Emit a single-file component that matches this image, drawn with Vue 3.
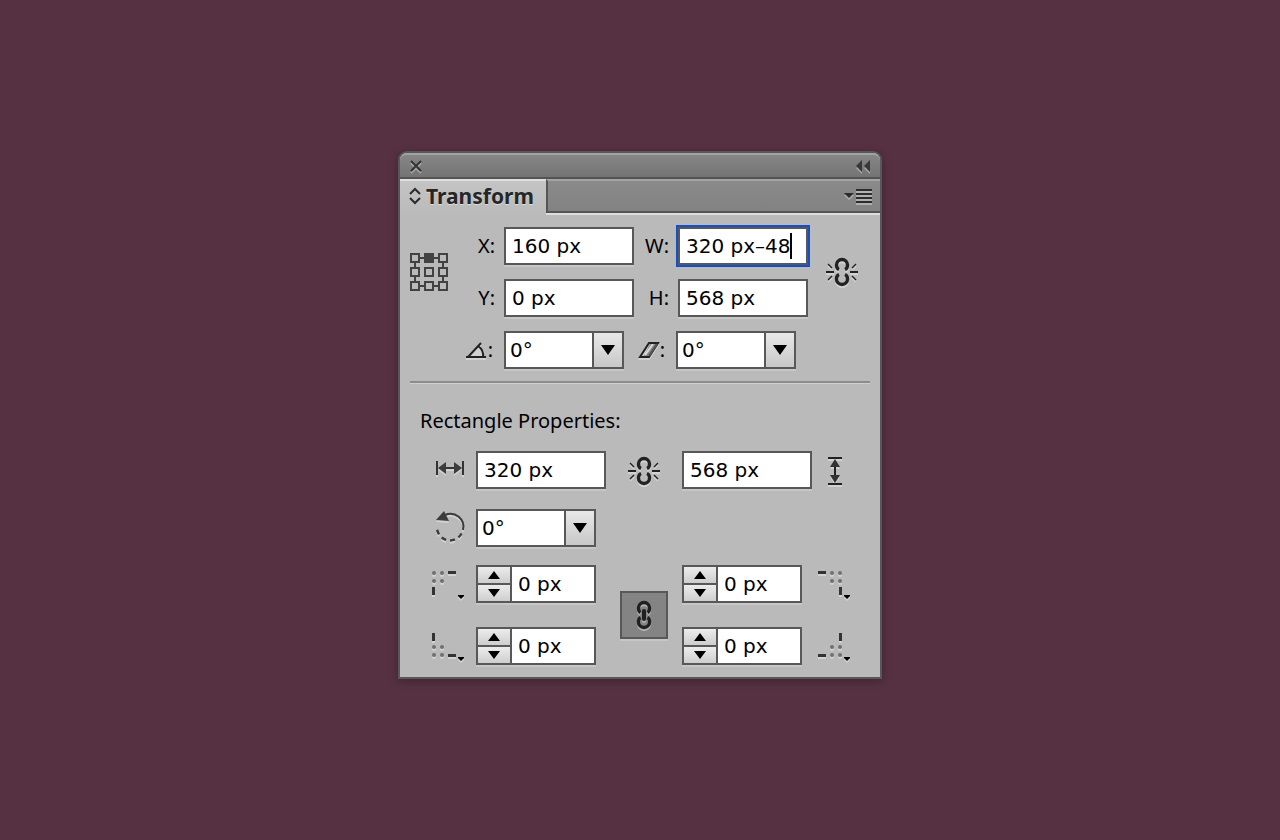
<script setup>
import { ref } from 'vue'

const x = ref('160 px')
const y = ref('0 px')
const w = ref('320 px–48')
const h = ref('568 px')
const rotate = ref('0°')
const shear = ref('0°')
const rectWidth = ref('320 px')
const rectHeight = ref('568 px')
const rectAngle = ref('0°')

const cells = [0, 14, 28]
const corners = ref([
  { id: 'tl', name: 'Top left radius', value: '0 px', dash: [16, 1], bar: [0, 17], dots: [2, 10], top: 3 },
  { id: 'tr', name: 'Top right radius', value: '0 px', dash: [0, 1], bar: [21, 17], dots: [14, 22], top: 3 },
  { id: 'bl', name: 'Bottom left radius', value: '0 px', dash: [16, 22], bar: [0, 1], dots: [2, 10], top: 15 },
  { id: 'br', name: 'Bottom right radius', value: '0 px', dash: [0, 22], bar: [21, 1], dots: [14, 22], top: 15 },
])
</script>

<template>
  <main class="stage">
    <section class="panel" aria-label="Transform">
      <header class="titlebar">
        <button class="bare" aria-label="Close">
          <svg class="icon" width="12" height="12" viewBox="0 0 12 12"><path d="M1 1L11 11M11 1L1 11" fill="none" stroke="#333" stroke-width="2" /></svg>
        </button>
        <button class="bare" aria-label="Collapse">
          <svg class="icon" width="14" height="12" viewBox="0 0 14 12"><path d="M6 0V12L0 6ZM14 0V12L8 6Z" fill="#383838" /></svg>
        </button>
      </header>

      <div class="tabs">
        <button class="tab">
          <svg width="12" height="18" viewBox="0 0 12 18" fill="none" stroke="#2c2c2c" stroke-width="2"><path d="M1 7L6 2L11 7M1 11L6 16L11 11" /></svg>
          <span>Transform</span>
        </button>
        <div class="tabfill">
          <button class="bare" aria-label="Panel menu">
            <svg class="icon" width="28" height="14" viewBox="0 0 28 14" fill="#2c2c2c"><path d="M0 4H10L5 9ZM12 0H28V2H12ZM12 4H28V6H12ZM12 8H28V10H12ZM12 12H28V14H12Z" /></svg>
          </button>
        </div>
      </div>

      <div class="geometry">
        <button class="bare" aria-label="Reference point">
          <svg width="38" height="38" viewBox="0 0 38 38" fill="none" stroke="#424242" stroke-width="2">
            <template v-for="cy in cells" :key="cy">
              <rect v-for="cx in cells" :key="cx" :x="cx + 1" :y="cy + 1" width="8" height="8" :fill="cx === 14 && cy === 0 ? '#424242' : 'none'" />
            </template>
            <path d="M10 5H14M24 5H28M10 33H14M24 33H28M5 10V14M5 24V28M33 10V14M33 24V28" />
          </svg>
        </button>
        <div class="pairs">
          <label for="x">X:</label>
          <input id="x" v-model="x" class="field" />
          <label for="w">W:</label>
          <div class="focused">
            <input id="w" v-model="w" class="field" />
            <i class="caret"></i>
          </div>
          <label for="y">Y:</label>
          <input id="y" v-model="y" class="field" />
          <label for="h">H:</label>
          <input id="h" v-model="h" class="field" />
        </div>
        <button class="bare" aria-label="Constrain proportions">
          <svg class="icon" width="32" height="30" viewBox="0 0 32 30"><use href="#broken-link" /></svg>
        </button>
      </div>

      <div class="angles">
        <label for="rotate" aria-label="Rotate">
          <svg class="icon" width="22" height="18" viewBox="0 0 22 18" fill="none" stroke="#222" stroke-width="2">
            <path d="M3 15L14 5Q18 9 18 15Z" fill="#d2d2d2" stroke="none" />
            <path d="M0 16H20M2 16L15 2M12 5Q18 9 17 16" />
          </svg>:
        </label>
        <div class="combo">
          <input id="rotate" v-model="rotate" />
          <button aria-label="Rotate presets"><svg width="14" height="11" viewBox="0 0 14 11"><path d="M0 0H14L7 10Z" /></svg></button>
        </div>
        <label for="shear" aria-label="Shear">
          <svg class="icon" width="22" height="18" viewBox="0 0 22 18" fill="none" stroke="#222">
            <path d="M12 3H20L10 15H6Z" fill="#888" stroke="none" />
            <path d="M7 14L15 3" stroke="#ddd" stroke-width="2" />
            <path d="M2 16L11 2H20L11 16Z" stroke-width="2" />
            <path d="M11 15L19 3" stroke="#555" stroke-width="2" />
          </svg>:
        </label>
        <div class="combo">
          <input id="shear" v-model="shear" />
          <button aria-label="Shear presets"><svg width="14" height="11" viewBox="0 0 14 11"><path d="M0 0H14L7 10Z" /></svg></button>
        </div>
      </div>

      <hr />
      <h2>Rectangle Properties:</h2>

      <div class="grid">
        <label for="rw" aria-label="Rectangle width">
          <svg class="icon" width="30" height="20" viewBox="0 0 30 20">
            <path d="M1 1V15M27 1V15M8 8H20" stroke="#333" stroke-width="2" />
            <path d="M2 8L10 2V14ZM26 8L18 2V14Z" fill="#3c3c3c" />
          </svg>
        </label>
        <input id="rw" v-model="rectWidth" class="field" />
        <button class="bare center" aria-label="Constrain rectangle proportions">
          <svg class="icon" width="32" height="32" viewBox="0 -2 32 32">
            <g id="broken-link" fill="none" stroke="#222">
              <path d="M13 12.500Q10.500 11.500 10.500 8A5.500 5.500 0 0 1 21.500 8Q21.500 11.500 19 12.500M13 17.500Q10.500 18.500 10.500 22A5.500 5.500 0 0 0 21.500 22Q21.500 18.500 19 17.500" stroke-width="3.400" />
              <path d="M0 15H8M24 15H32" stroke-width="2" />
              <path d="M2 7L6 11M30 7L26 11M2 23L6 19M30 23L26 19" stroke-width="1.400" />
            </g>
          </svg>
        </button>
        <input id="rh" v-model="rectHeight" class="field" />
        <label for="rh" class="after" aria-label="Rectangle height">
          <svg class="icon" width="14" height="30" viewBox="0 -2 14 30">
            <path d="M0 1H14M0 27H14M7 8V20" stroke="#222" stroke-width="2" />
            <path d="M7 2L12 10H2ZM7 26L12 18H2Z" fill="#333" />
          </svg>
        </label>
      </div>

      <div class="grid angle-row">
        <label for="ra" aria-label="Rectangle angle">
          <svg class="icon" width="30" height="34" viewBox="0 0 30 34" fill="none" stroke="#3c3c3c" stroke-width="2">
            <path d="M9 4A13 13 0 0 1 27 19" />
            <path d="M25.500 22.500A13 13 0 0 1 1 16" stroke-width="2.400" stroke-dasharray="5 4" />
            <path d="M0 9L8 0L13 10Z" fill="#3c3c3c" stroke="none" />
          </svg>
        </label>
        <div class="combo">
          <input id="ra" v-model="rectAngle" />
          <button aria-label="Angle presets"><svg width="14" height="11" viewBox="0 0 14 11"><path d="M0 0H14L7 10Z" /></svg></button>
        </div>
      </div>

      <div class="grid corners">
        <template v-for="c in corners" :key="c.id">
          <button class="bare corner" :class="c.id" :aria-label="c.name + ' type'">
            <svg class="icon" width="32" height="28" viewBox="0 0 32 28" fill="#333">
              <rect :x="c.dash[0]" :y="c.dash[1]" width="8" height="3" />
              <rect :x="c.bar[0]" :y="c.bar[1]" width="3" height="8" />
              <template v-for="d in c.dots" :key="d">
                <circle :cx="d" :cy="c.top" r="2" fill="#707070" />
                <circle :cx="d" :cy="c.top + 8" r="2" fill="#707070" />
              </template>
              <path d="M26 25H32V26L29 29L26 26Z" fill="#000" />
            </svg>
          </button>
          <div class="spinner" :class="'s' + c.id">
            <div class="steps">
              <button :aria-label="c.name + ' up'"><svg width="12" height="8" viewBox="0 0 12 8"><path d="M0 8H12L6 0Z" /></svg></button>
              <button :aria-label="c.name + ' down'"><svg width="12" height="8" viewBox="0 0 12 8"><path d="M0 0H12L6 8Z" /></svg></button>
            </div>
            <input v-model="c.value" :aria-label="c.name" />
          </div>
        </template>
        <button class="linked" aria-label="Link corner radii" aria-pressed="true">
          <svg class="icon" width="16" height="28" viewBox="0 0 16 28" fill="none" stroke="#202020" stroke-width="3.400">
            <path d="M4.500 11.500Q2.500 10.500 2.500 7A5.500 5.500 0 0 1 13.500 7Q13.500 10.500 11.500 11.500M4.500 16.500Q2.500 17.500 2.500 21A5.500 5.500 0 0 0 13.500 21Q13.500 17.500 11.500 16.500" />
            <path d="M8 10V18" stroke-width="4" stroke-linecap="round" />
          </svg>
        </button>
      </div>
    </section>
  </main>
</template>

<style>
body {
  background: #563142;
}
</style>

<style scoped>
.stage {
  display: flex;
  justify-content: center;
  align-items: flex-start;
  padding: 151px 16px 16px;
  font: 20px/24px "DejaVu Sans", sans-serif;
  color: #000;
}
.panel {
  box-sizing: border-box;
  width: 100%;
  max-width: 484px;
  padding-bottom: 12px;
  border: 2px solid #58585a;
  border-radius: 9px 9px 0 0;
  background: #bababa;
  box-shadow: 0 2px 8px rgba(0, 0, 0, 0.3);
}
button,
input {
  margin: 0;
  font: inherit;
  color: inherit;
  border-radius: 0;
}
input {
  box-sizing: border-box;
  min-width: 0;
  outline: 0;
}
svg {
  display: block;
}
.icon {
  filter: drop-shadow(0 2px 0 rgba(255, 255, 255, 0.35));
  overflow: visible;
}
.bare {
  display: flex;
  padding: 0;
  border: 0;
  background: none;
}
.center {
  justify-self: center;
}
.titlebar {
  display: flex;
  align-items: center;
  justify-content: space-between;
  box-sizing: border-box;
  height: 26px;
  padding: 0 10px;
  border-top: 2px solid #a2a2a2;
  border-bottom: 2px solid #535353;
  border-radius: 7px 7px 0 0;
  background: linear-gradient(#868686, #747474);
}
.tabs {
  display: flex;
  height: 36px;
}
.tab {
  display: flex;
  align-items: center;
  gap: 5px;
  box-sizing: border-box;
  padding: 0 12px 4px 9px;
  border: 0;
  border-top: 2px solid #dedede;
  background: linear-gradient(#c4c4c4, #bababa);
  font: bold 21px/24px "Noto Sans", sans-serif;
  color: #262626;
  text-shadow: 0 1px 0 #dcdcdc;
}
.tabfill {
  flex: 1;
  display: flex;
  align-items: center;
  justify-content: flex-end;
  box-sizing: border-box;
  height: 34px;
  padding-right: 8px;
  border-left: 2px solid #555;
  border-top: 2px solid #a4a4a4;
  border-bottom: 2px solid #555;
  background: linear-gradient(#8a8a8a, #828282);
  box-shadow: 0 2px 0 #dedede;
}
.geometry {
  display: flex;
  align-items: center;
  padding: 12px 10px 0;
}
.pairs {
  display: grid;
  grid-template-columns: 48px 130px 28px 130px;
  gap: 14px 8px;
  align-items: center;
  margin-right: 18px;
}
label {
  display: flex;
  align-items: center;
  justify-content: flex-end;
  font-family: "Noto Sans", sans-serif;
}
.pairs label {
  padding-right: 1px;
}
.field,
.combo,
.spinner {
  box-sizing: border-box;
  width: 100%;
  height: 38px;
  border: 2px solid #585858;
  background: #fff;
  box-shadow: 0 2px 0 rgba(255, 255, 255, 0.2);
}
.field {
  padding: 0 6px;
}
.focused {
  position: relative;
  display: flex;
  outline: 2px solid #1450cc;
}
.caret {
  position: absolute;
  right: 16px;
  top: 6px;
  width: 2px;
  height: 26px;
  background: #000;
}
.angles {
  display: grid;
  grid-template-columns: 48px 120px 36px 120px;
  column-gap: 8px;
  align-items: center;
  padding: 14px 10px 0 48px;
}
.angles label {
  padding-right: 3px;
}
.combo {
  display: flex;
  max-width: 120px;
}
.combo input {
  flex: 1;
  padding: 0 4px;
  border: 0;
  background: none;
}
.combo button {
  display: flex;
  align-items: center;
  justify-content: center;
  width: 30px;
  padding: 0;
  border: 0;
  border-left: 2px solid #585858;
  background: linear-gradient(#e8e8e8, #c8c8c8);
}
hr {
  height: 1px;
  margin: 12px 10px 0;
  border: 0;
  border-top: 2px solid #8c8c8c;
  background: #cfcfcf;
}
h2 {
  margin: 25px 20px 18px;
  font: 20px/24px "Noto Sans", sans-serif;
}
.grid {
  display: grid;
  grid-template-columns: 46px 130px 76px 130px 38px;
  align-items: center;
  padding-left: 30px;
}
.grid label {
  justify-content: flex-start;
  padding-left: 6px;
}
.grid .after {
  padding-left: 16px;
}
.angle-row {
  margin-top: 20px;
}
.corners {
  grid-template-rows: 38px 38px;
  row-gap: 24px;
  margin-top: 18px;
}
.corner {
  grid-column: 1;
  padding-left: 2px;
}
.tl, .tr, .stl, .str { grid-row: 1; }
.bl, .br, .sbl, .sbr { grid-row: 2; }
.stl, .sbl { grid-column: 2; }
.str, .sbr { grid-column: 4; }
.tr, .br {
  grid-column: 5;
  padding-left: 6px;
}
.spinner {
  display: flex;
  max-width: 120px;
}
.steps {
  display: grid;
  grid-template-rows: 1fr 1fr;
  gap: 2px;
  width: 32px;
  border-right: 2px solid #585858;
  background: #585858;
}
.steps button {
  display: flex;
  align-items: center;
  justify-content: center;
  padding: 0;
  border: 0;
  background: linear-gradient(#ececec, #cecece);
}
.spinner input {
  flex: 1;
  padding: 0 6px;
  border: 0;
  background: none;
}
.linked {
  display: flex;
  align-items: center;
  justify-content: center;
  grid-area: 1 / 3 / 3 / 4;
  justify-self: center;
  width: 48px;
  height: 48px;
  padding: 0;
  border: 2px solid #585858;
  background: #848484;
  box-shadow: 0 2px 0 rgba(255, 255, 255, 0.2);
}
</style>
